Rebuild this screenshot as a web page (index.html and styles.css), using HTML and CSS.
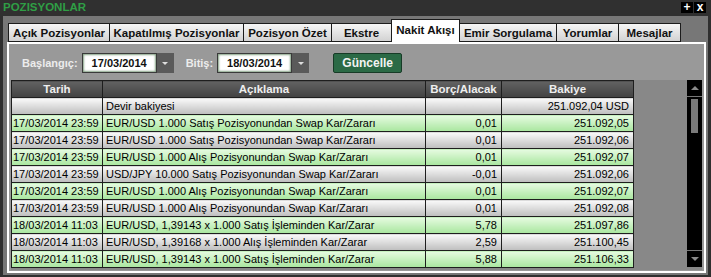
FILE: index.html
```html
<!DOCTYPE html>
<html lang="tr">
  <head>
    <meta charset="UTF-8" />
    <title>Pozisyonlar</title>
    <link rel="stylesheet" href="styles.css">
  </head>
  <body>
    <div class="titlebar">
      <span class="title">POZISYONLAR</span>
      <div class="win-buttons">
        <span class="win-btn">+</span>
        <span class="win-btn">x</span>
      </div>
    </div>

    <div class="window">
      <div class="tabs">
        <div class="tab">Açık Pozisyonlar</div>
        <div class="tab">Kapatılmış Pozisyonlar</div>
        <div class="tab">Pozisyon Özet</div>
        <div class="tab">Ekstre</div>
        <div class="tab active">Nakit Akışı</div>
        <div class="tab">Emir Sorgulama</div>
        <div class="tab">Yorumlar</div>
        <div class="tab">Mesajlar</div>
      </div>

      <div class="panel">
        <div class="filters">
          <label class="filter-label">Başlangıç:</label>
          <div class="date-field">
            <span class="date-value">17/03/2014</span>
            <span class="date-drop"></span>
          </div>
          <label class="filter-label second">Bitiş:</label>
          <div class="date-field">
            <span class="date-value">18/03/2014</span>
            <span class="date-drop"></span>
          </div>
          <button class="update-btn">Güncelle</button>
        </div>

        <div class="grid-wrap">
          <table class="grid">
            <colgroup>
              <col class="c-date" />
              <col class="c-desc" />
              <col class="c-amount" />
              <col class="c-balance" />
            </colgroup>
            <thead>
              <tr>
                <th>Tarih</th>
                <th>Açıklama</th>
                <th>Borç/Alacak</th>
                <th>Bakiye</th>
              </tr>
            </thead>
            <tbody>
              <tr class="grey">
                <td></td>
                <td>Devir bakiyesi</td>
                <td class="num"></td>
                <td class="num">251.092,04 USD</td>
              </tr>
              <tr class="green">
                <td class="date">17/03/2014 23:59</td>
                <td>EUR/USD 1.000 Satış Pozisyonundan Swap Kar/Zararı</td>
                <td class="num">0,01</td>
                <td class="num">251.092,05</td>
              </tr>
              <tr class="grey">
                <td class="date">17/03/2014 23:59</td>
                <td>EUR/USD 1.000 Satış Pozisyonundan Swap Kar/Zararı</td>
                <td class="num">0,01</td>
                <td class="num">251.092,06</td>
              </tr>
              <tr class="green">
                <td class="date">17/03/2014 23:59</td>
                <td>EUR/USD 1.000 Alış Pozisyonundan Swap Kar/Zararı</td>
                <td class="num">0,01</td>
                <td class="num">251.092,07</td>
              </tr>
              <tr class="grey">
                <td class="date">17/03/2014 23:59</td>
                <td>USD/JPY 10.000 Satış Pozisyonundan Swap Kar/Zararı</td>
                <td class="num">-0,01</td>
                <td class="num">251.092,06</td>
              </tr>
              <tr class="green">
                <td class="date">17/03/2014 23:59</td>
                <td>EUR/USD 1.000 Alış Pozisyonundan Swap Kar/Zararı</td>
                <td class="num">0,01</td>
                <td class="num">251.092,07</td>
              </tr>
              <tr class="grey">
                <td class="date">17/03/2014 23:59</td>
                <td>EUR/USD 1.000 Alış Pozisyonundan Swap Kar/Zararı</td>
                <td class="num">0,01</td>
                <td class="num">251.092,08</td>
              </tr>
              <tr class="green">
                <td class="date">18/03/2014 11:03</td>
                <td>EUR/USD, 1,39143 x 1.000 Satış İşleminden Kar/Zarar</td>
                <td class="num">5,78</td>
                <td class="num">251.097,86</td>
              </tr>
              <tr class="grey">
                <td class="date">18/03/2014 11:03</td>
                <td>EUR/USD, 1,39168 x 1.000 Alış İşleminden Kar/Zarar</td>
                <td class="num">2,59</td>
                <td class="num">251.100,45</td>
              </tr>
              <tr class="green">
                <td class="date">18/03/2014 11:03</td>
                <td>EUR/USD, 1,39143 x 1.000 Satış İşleminden Kar/Zarar</td>
                <td class="num">5,88</td>
                <td class="num">251.106,33</td>
              </tr>
            </tbody>
          </table>

          <div class="scrollbar">
            <div class="scroll-btn up"><span class="arrow-up"></span></div>
            <div class="scroll-track"><div class="scroll-thumb"></div></div>
            <div class="scroll-btn down"><span class="arrow-down"></span></div>
          </div>
        </div>
      </div>
    </div>
  </body>
</html>
```

FILE: styles.css
```css
body {
  margin: 0;
  background: #2f2f2f;
  font-family: "Liberation Sans", Arial, sans-serif;
  font-size: 11px;
}
.titlebar {
  height: 16px;
  display: flex;
  justify-content: space-between;
  align-items: flex-start;
  background: #303030;
}
.title {
  color: #2f9e45;
  font-weight: bold;
  font-size: 11.5px;
  line-height: 14px;
  padding-left: 3px;
}
.win-buttons {
  display: flex;
  gap: 1px;
  margin: 2px 5px 0 0;
}
.win-btn {
  width: 12px;
  height: 11px;
  background: #000;
  color: #fff;
  font-weight: bold;
  font-size: 12px;
  line-height: 11px;
  text-align: center;
}
.window {
  height: 259px;
  margin: 0 3px;
  padding: 3px 2px 2px 4px;
  box-sizing: border-box;
  background: #777;
  display: flex;
  flex-direction: column;
}
.tabs {
  height: 23px;
  display: flex;
  align-items: flex-end;
  padding-left: 1px;
}
.tab {
  height: 19px;
  box-sizing: border-box;
  border: 1px solid #1c1c1c;
  margin-left: -1px;
  background: linear-gradient(#f6f6f6, #d2d2d2);
  color: #111;
  font-weight: bold;
  font-size: 11.5px;
  display: flex;
  align-items: center;
  justify-content: center;
}
.tab:first-child { margin-left: 0; width: 102px; }
.tab:nth-child(2) { width: 135px; }
.tab:nth-child(3) { width: 89px; }
.tab:nth-child(4) { width: 61px; }
.tab:nth-child(5) { width: 69px; }
.tab:nth-child(6) { width: 98px; }
.tab:nth-child(7) { width: 63px; }
.tab:nth-child(8) { width: 63px; }
.tab.active {
  height: 23px;
  background: #fff;
  border-bottom: none;
  padding-bottom: 2px;
}
.panel {
  flex: 1;
  border: 2px solid #fff;
  background: #999;
  padding: 9px 2px 1px;
  display: flex;
  flex-direction: column;
}
.filters {
  height: 20px;
  display: flex;
  align-items: center;
  padding-left: 11px;
}
.filter-label {
  color: #ececec;
  font-weight: bold;
  margin-right: 4px;
}
.filter-label.second {
  margin-left: 12px;
}
.date-field {
  display: flex;
  height: 20px;
}
.date-value {
  width: 75px;
  box-sizing: border-box;
  border: 1px solid #3a3a3a;
  background: #fff;
  box-shadow: inset 0 0 2px 1px #86a286;
  font-weight: bold;
  color: #111;
  text-align: center;
  line-height: 18px;
}
.date-drop {
  width: 17px;
  background: #5a5a5a;
  display: flex;
  align-items: center;
  justify-content: center;
}
.date-drop::after {
  content: "";
  border-left: 3px solid transparent;
  border-right: 3px solid transparent;
  border-top: 3px solid #ddd;
}
.update-btn {
  margin-left: 24px;
  width: 69px;
  height: 20px;
  padding: 0;
  background: #2b6a46;
  border: 1px solid #173b27;
  border-radius: 2px;
  color: #f2f2f2;
  font-family: "Liberation Sans", Arial, sans-serif;
  font-size: 12px;
  font-weight: bold;
}
.grid-wrap {
  flex: 1;
  margin-top: 7px;
  background: #888;
  display: flex;
  justify-content: space-between;
  align-items: flex-start;
}
.grid {
  width: 623px;
  table-layout: fixed;
  border-collapse: collapse;
}
.c-date { width: 91px; }
.c-desc { width: 323px; }
.c-amount { width: 76px; }
.c-balance { width: 132px; }
.grid th,
.grid td {
  height: 16px;
  padding: 0 3px;
  border: 1px solid #1e1e1e;
  line-height: 15px;
  white-space: nowrap;
  overflow: hidden;
}
.grid th {
  background: linear-gradient(#626262, #424242);
  color: #eee;
  font-weight: bold;
  font-size: 11.5px;
  text-align: center;
}
.grid td {
  color: #000;
  text-align: left;
}
.grid td.date {
  padding-left: 1px;
}
.grid td.num {
  text-align: right;
  padding-right: 4px;
}
.grid .grey td {
  background: linear-gradient(#fafafa, #bdbdbd);
}
.grid .green td {
  background: linear-gradient(#e6fbe1, #a8e69e);
}
.scrollbar {
  width: 15px;
  height: 187px;
  background: #000;
  display: flex;
  flex-direction: column;
}
.scroll-btn {
  height: 16px;
  display: flex;
  align-items: center;
  justify-content: center;
}
.scroll-btn.up {
  border-bottom: 1px solid #777;
}
.scroll-btn.down {
  border-top: 1px solid #777;
}
.arrow-up {
  border-left: 4px solid transparent;
  border-right: 4px solid transparent;
  border-bottom: 4px solid #8a8a8a;
}
.arrow-down {
  border-left: 4px solid transparent;
  border-right: 4px solid transparent;
  border-top: 4px solid #8a8a8a;
}
.scroll-track {
  flex: 1;
  padding: 2px 0 0 4px;
}
.scroll-thumb {
  width: 7px;
  height: 34px;
  background: #7a7a7a;
}
```
